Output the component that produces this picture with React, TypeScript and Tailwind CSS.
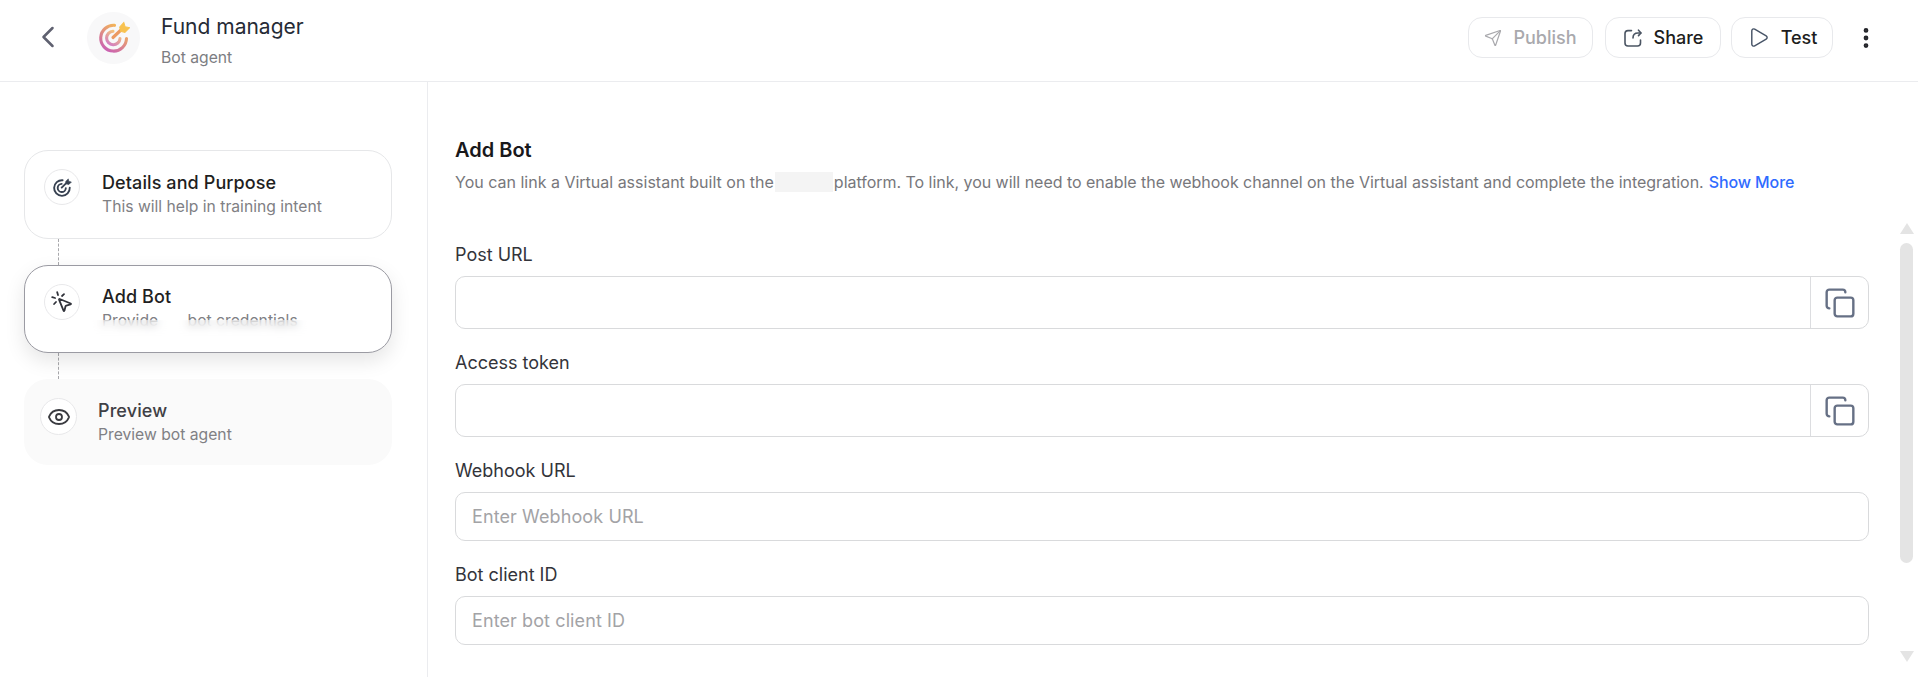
import React from "react";
import {
  ChevronLeft,
  Copy,
  EllipsisVertical,
  Eye,
  MousePointerClick,
  Play,
  Send,
} from "lucide-react";

const TargetIcon = ({ size = 18, stroke = "#374151" }: { size?: number; stroke?: string }) => (
  <svg width={size} height={size} viewBox="0 0 32 32" fill="none" stroke={stroke} strokeWidth="3" strokeLinecap="round">
    <path d="M17 5.2A12.5 12.5 0 1 0 28.4 17" />
    <path d="M15.5 11a6.5 6.5 0 1 0 6.6 7" />
    <path d="M15.5 17L24 8.5" />
    <path d="M22 7l4-4 1 4 4 1-4 4-4-1z" fill={stroke} strokeWidth="1" />
  </svg>
);

const LogoIcon = () => (
  <svg width="33" height="33" viewBox="0 0 32 32" fill="none" strokeWidth="3" strokeLinecap="round">
    <defs>
      <linearGradient id="logoGrad" x1="0.8" y1="0" x2="0.2" y2="1">
        <stop offset="0" stopColor="#f7bd4f" />
        <stop offset="1" stopColor="#c95fb5" />
      </linearGradient>
    </defs>
    <path d="M17 4.2A12.5 12.5 0 1 0 28.6 17" stroke="url(#logoGrad)" />
    <path d="M15.5 10a6.5 6.5 0 1 0 6.8 7" stroke="url(#logoGrad)" opacity="0.8" />
    <path d="M15.5 16L24 8" stroke="#ec9a62" />
    <path d="M22 6l4-4.5 1.2 4 4.3 1-4.5 4.5-4-1z" fill="#f8c24f" stroke="#f8c24f" strokeWidth="1" />
  </svg>
);

const ShareIcon = () => (
  <svg width="20" height="20" viewBox="0 0 20 20" fill="none" stroke="#4b5563" strokeWidth="1.6" strokeLinecap="round" strokeLinejoin="round">
    <path d="M8.5 2.6H5a3 3 0 0 0-3 3V15a3 3 0 0 0 3 3h9.5a3 3 0 0 0 3-3v-3" />
    <path d="M10 10c0-3 1.8-5 5-5h2.8" />
    <path d="M15.5 2.2L18 5l-2.5 2.6" />
  </svg>
);

const HeaderButton = ({
  icon,
  label,
  disabled,
  className,
}: {
  icon: React.ReactNode;
  label: string;
  disabled?: boolean;
  className: string;
}) => (
  <button
    className={`h-[41px] flex items-center justify-center gap-[11px] rounded-[14px] border border-[#e8e9ec] bg-white text-[18px] font-medium ${
      disabled ? "text-[#a9a9ad]" : "text-[#1d1d20]"
    } ${className}`}
  >
    {icon}
    {label}
  </button>
);

const Field = ({
  label,
  placeholder,
  copy,
  className,
}: {
  label: string;
  placeholder?: string;
  copy?: boolean;
  className: string;
}) => (
  <div className={className}>
    <div className="text-[18px] leading-[24px] text-[#33343a]">{label}</div>
    <div className={`mt-[9px] flex rounded-[10px] border border-[#d9dadc] bg-white ${copy ? "h-[53px]" : "h-[49px]"}`}>
      <div className="flex-1 flex items-center px-[16px] text-[18px] tracking-[0.1px] text-[#a3a3a6]">{placeholder}</div>
      {copy && (
        <div className="w-[58px] border-l border-[#dcdde0] flex items-center justify-center">
          <Copy size={32} strokeWidth={1.8} color="#667085" />
        </div>
      )}
    </div>
  </div>
);

const App = () => {
  return (
    <div className="w-[1918px] h-[677px] overflow-hidden bg-white font-['Inter',sans-serif]">
      {/* HEADER */}
      <header className="h-[82px] border-b border-[#ebecef] flex items-center pl-[30px] pr-[39px]">
        <ChevronLeft size={36} strokeWidth={1.7} color="#5f6170" className="mt-[-7px]" />
        <div className="ml-[21px] w-[53px] h-[52px] rounded-full bg-[#f8f8f9] flex items-center justify-center mt-[-6px]">
          <LogoIcon />
        </div>
        <div className="ml-[21px] mt-[-1px]">
          <div className="text-[21px] leading-[28px] text-[#262b36]">Fund manager</div>
          <div className="mt-[7px] text-[15.7px] leading-[20px] text-[#7c7d82]">Bot agent</div>
        </div>

        <div className="ml-auto flex items-center mt-[-6px]">
          <HeaderButton icon={<Send size={18} strokeWidth={1.6} color="#a9a9ad" />} label="Publish" disabled className="w-[125px]" />
          <HeaderButton icon={<ShareIcon />} label="Share" className="w-[116px] ml-[12px]" />
          <HeaderButton icon={<Play size={23} strokeWidth={1.5} color="#475467" />} label="Test" className="w-[102px] ml-[10px]" />
          <EllipsisVertical size={26} strokeWidth={2.4} color="#24252a" className="ml-[20px]" />
        </div>
      </header>

      <div className="flex h-[595px]">
        {/* SIDEBAR */}
        <aside className="w-[428px] shrink-0 border-r border-[#ebecef] pl-[24px] pr-[35px] pt-[68px]">
          <div className="h-[89px] rounded-[24px] border border-[#e6e7e9] bg-white flex pl-[19px] pt-[18px]">
            <div className="w-[36px] h-[36px] rounded-full border border-[#e8e8ea] flex items-center justify-center">
              <TargetIcon size={20} />
            </div>
            <div className="ml-[22px] mt-[2px]">
              <div className="text-[18px] font-medium tracking-[0.1px] leading-[24px] text-[#1f1f22]">Details and Purpose</div>
              <div className="text-[15.7px] leading-[24px] text-[#808084]">This will help in training intent</div>
            </div>
          </div>
          <div className="ml-[34px] h-[26px] border-l border-dashed border-[#a8a8ac]" />

          <div className="relative h-[88px] rounded-[24px] border border-[#9b9ba3] bg-white flex pl-[19px] pt-[18px] shadow-[0_8px_20px_rgba(0,0,0,0.1)] overflow-hidden">
            <div className="w-[36px] h-[36px] rounded-full border border-[#e8e8ea] flex items-center justify-center">
              <MousePointerClick size={24} strokeWidth={1.8} color="#30323a" />
            </div>
            <div className="ml-[22px] mt-[1px]">
              <div className="text-[18px] font-medium tracking-[0.1px] leading-[24px] text-[#1f1f22]">Add Bot</div>
              <div className="text-[15.7px] leading-[24px] text-[#808084]">
                Provide <span className="ml-[25px]">bot credentials</span>
              </div>
            </div>
            <div className="absolute left-[66px] top-[54px] w-[230px] h-[24px] bg-white/40 backdrop-blur-[4px]" />
          </div>
          <div className="ml-[34px] h-[26px] border-l border-dashed border-[#a8a8ac]" />

          <div className="h-[86px] rounded-[24px] bg-[#fafafa] flex pl-[16px] pt-[19px]">
            <div className="w-[37px] h-[37px] rounded-full border border-[#e8e8ea] bg-white flex items-center justify-center">
              <Eye size={24} strokeWidth={1.8} color="#3a3b40" />
            </div>
            <div className="ml-[21px] mt-[1px]">
              <div className="text-[18px] font-medium tracking-[0.1px] leading-[24px] text-[#3f4045]">Preview</div>
              <div className="text-[15.7px] leading-[24px] text-[#808084]">Preview bot agent</div>
            </div>
          </div>
        </aside>

        {/* MAIN */}
        <main className="flex-1 flex pl-[27px]">
          <div className="w-[1414px] pt-[56px]">
            <h2 className="text-[20px] font-semibold leading-[24px] text-[#18181b]">Add Bot</h2>
            <p className="mt-[8px] text-[16px] leading-[24px] text-[#77777b] flex whitespace-nowrap">
              You can link a Virtual assistant built on the
              <span className="mx-[1px] w-[58px] h-[20px] mt-[2px] bg-[#f4f4f4]" />
              <span className="tracking-[-0.03px]">
                platform. To link, you will need to enable the webhook channel on the Virtual assistant and complete the integration.
              </span>
              <span className="ml-[5px] text-[#2f6bff] tracking-[-0.1px] font-medium">Show More</span>
            </p>
            <Field label="Post URL" copy className="mt-[49px]" />
            <Field label="Access token" copy className="mt-[22px]" />
            <Field label="Webhook URL" placeholder="Enter Webhook URL" className="mt-[22px]" />
            <Field label="Bot client ID" placeholder="Enter bot client ID" className="mt-[22px]" />
          </div>

          {/* SCROLLBAR */}
          <div className="ml-[31px] w-[13px] pt-[141px] flex flex-col items-center">
            <div className="shrink-0 w-0 h-0 border-x-[7px] border-x-transparent border-b-[11px] border-b-[#e4e4e4]" />
            <div className="shrink-0 mt-[9px] w-[13px] h-[320px] rounded-full bg-[#e4e4e4]" />
            <div className="shrink-0 mt-[88px] w-0 h-0 border-x-[7px] border-x-transparent border-t-[11px] border-t-[#e4e4e4]" />
          </div>
        </main>
      </div>
    </div>
  );
};

export default App;
